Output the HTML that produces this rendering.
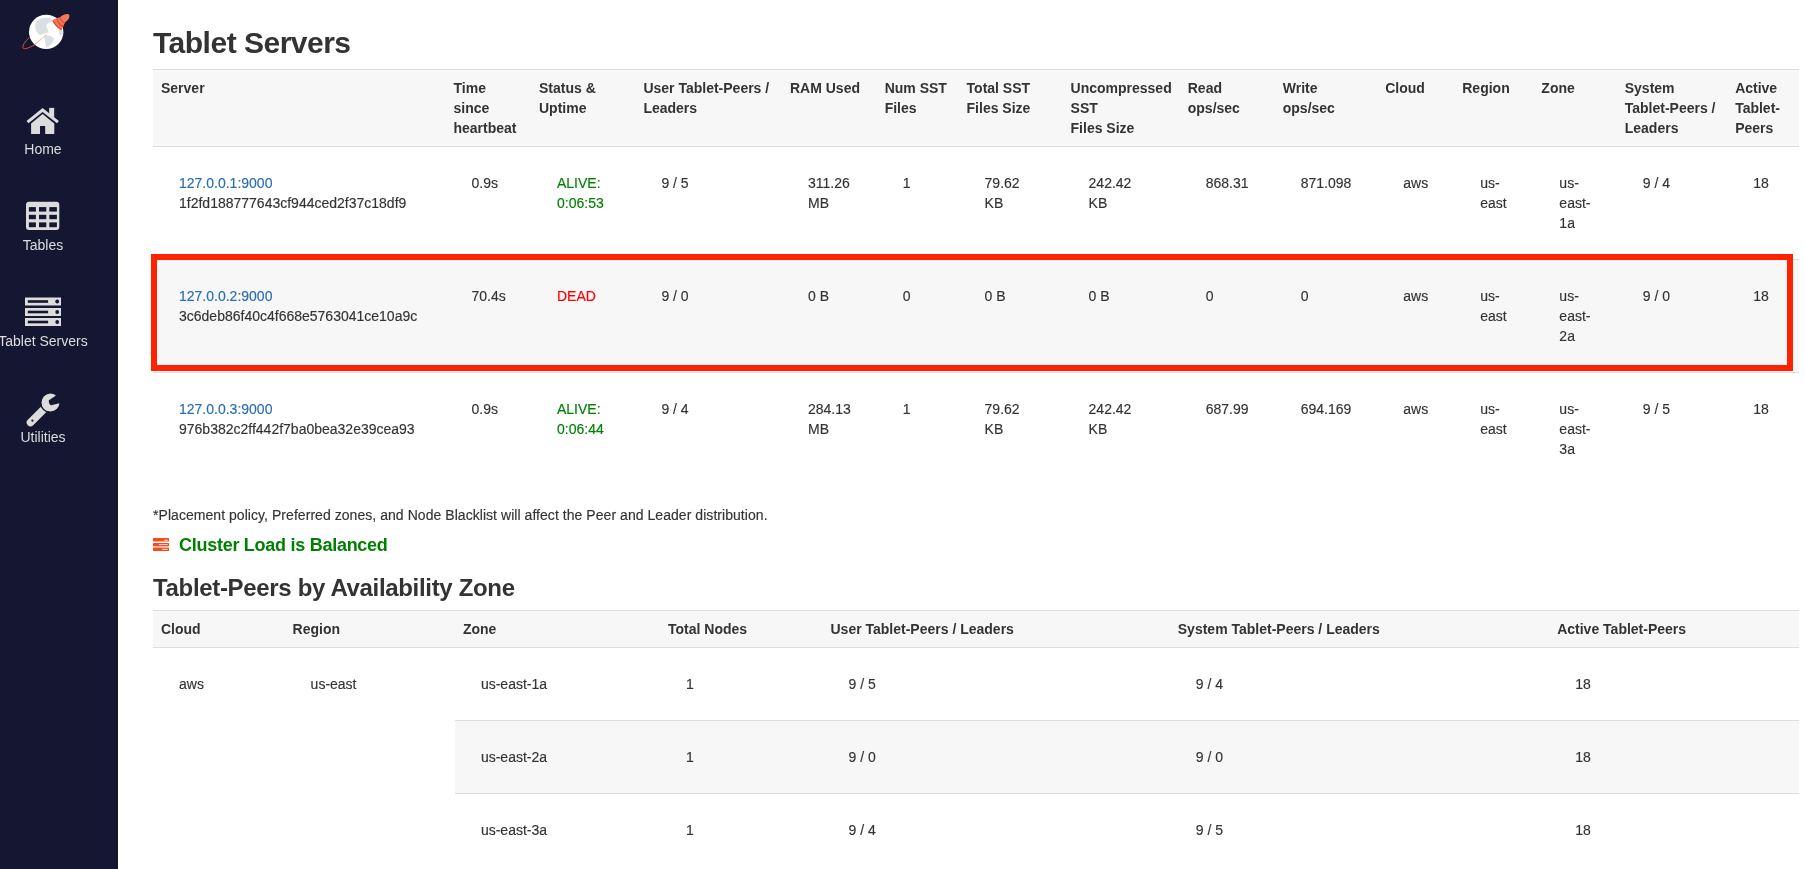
<!DOCTYPE html>
<html>
<head>
<meta charset="utf-8">
<style>
html,body{margin:0;padding:0;background:#fff;}
body{width:1805px;height:869px;overflow:hidden;position:relative;font-family:"Liberation Sans",sans-serif;font-size:14px;line-height:20px;color:#333;}
#side{will-change:transform;position:absolute;left:0;top:0;width:118px;height:869px;background:#151632;}
.nl{position:absolute;left:-20px;width:126px;text-align:center;color:#dcdcdc;font-size:14px;line-height:20px;white-space:nowrap;}
#main{will-change:transform;position:absolute;left:153px;top:0;width:1646px;}
h2{margin:0;position:absolute;top:26px;left:0;font-size:30px;line-height:33px;font-weight:bold;color:#333;white-space:nowrap;letter-spacing:-0.5px;}
h3{margin:0;position:absolute;left:0;font-size:24px;line-height:26px;font-weight:bold;letter-spacing:-0.33px;color:#333;white-space:nowrap;}
table{border-collapse:collapse;border-spacing:0;table-layout:fixed;position:absolute;left:0;}
th{background:#f7f7f7;text-align:left;vertical-align:top;font-weight:bold;padding:8px;border-top:1px solid #ddd;border-bottom:1px solid #ddd;}
td{vertical-align:top;padding:26px;-webkit-text-stroke:0.15px;border-top:1px solid #ddd;white-space:nowrap;}
tbody tr:first-child td{border-top:0;}
tr.g td{background:#f7f7f7;}
a{color:#2a6db2;text-decoration:none;}
.ok{color:#008000;}
.dead{color:#f00;}
</style>
</head>
<body>
<div id="side">
<svg width="118" height="869" viewBox="0 0 118 869" style="position:absolute;left:0;top:0">
<!-- logo -->
<circle cx="46.2" cy="31.9" r="17.2" fill="#fff"/>
<path d="M35.5,24 C37,20 41,18 45,17.8 C48,17.5 51,18 52.5,19.5 C53,21 51,22 49.5,22.5 C47,23.5 46,25 46.5,27 C47,29 49,30 48,32 C46.5,34 43.5,33 42,34.5 C40.5,35.5 39,35 38,33.5 C36,31 34.5,27 35.5,24 Z" fill="#dadfe4"/>
<path d="M44.5,35.5 C47,35 50.5,35.5 53,37.5 C54.5,39 54,41.5 52.5,43 C50,45 48,47 46.5,48 C45.5,46 45.5,43 45,40.5 C44.5,38.5 43.5,36.5 44.5,35.5 Z" fill="#dadfe4"/>
<path d="M59,29.5 C60.5,28.5 62.5,30 63.2,32.5 C63,35 61,36 60,35 C58.8,33.5 58.5,31 59,29.5 Z" fill="#dadfe4"/>
<path d="M29.2,37.6 C24.5,42 22,46 23.2,48.2 C24.5,49.6 29,48 34.5,44.8" fill="none" stroke="#d5532f" stroke-width="1" stroke-linecap="round"/>
<path d="M33.1,46.2 L53.6,28.8 L35,43.9 Z" fill="#ec6a48"/>
<path d="M52.4,20.4 C53.5,19 57,18.2 60.2,16.9 C62.8,14.8 66.5,13.6 68.7,14.2 C70,15.2 69.8,17.8 67.6,20.2 C66.6,21.2 65.6,22 65,22.6 C63.8,25 62.8,27.5 61.6,29.9 C60.6,30.2 58,27.8 56.4,25.8 C54.8,23.8 52.9,21.8 52.4,20.4 Z" fill="#f27a5b"/>
<path d="M52.9,20.7 Q55.8,26.2 61.4,29.6 M56.8,18.8 Q58.6,24.1 63.1,26.6 M59.8,17.6 Q61.6,21.8 64.8,23.4" fill="none" stroke="#e8482a" stroke-width="1.3"/>
<!-- home -->
<polygon points="26.5,120.9 42.6,107.9 58.9,120.9 57,123.3 42.6,111.9 28.5,123.3" fill="#dcdcdc"/>
<rect x="49.2" y="107.9" width="5" height="9" fill="#dcdcdc"/>
<polygon points="31.1,123.4 42.6,114.1 54.3,123.4 54.3,134.1 45.2,134.1 45.2,126 40,126 40,134.1 31.1,134.1" fill="#dcdcdc"/>
<!-- tables -->
<rect x="26" y="201.7" width="33.3" height="28.3" rx="3" fill="#dcdcdc"/>
<g fill="#151632">
<rect x="28.9" y="207.1" width="7" height="4.5"/><rect x="39" y="207.1" width="7.3" height="4.5"/><rect x="49.3" y="207.1" width="7.6" height="4.5"/>
<rect x="28.9" y="214.8" width="7" height="4.4"/><rect x="39" y="214.8" width="7.3" height="4.4"/><rect x="49.3" y="214.8" width="7.6" height="4.4"/>
<rect x="28.9" y="222.4" width="7" height="4.8"/><rect x="39" y="222.4" width="7.3" height="4.8"/><rect x="49.3" y="222.4" width="7.6" height="4.8"/>
</g>
<!-- servers -->
<g fill="#dcdcdc">
<rect x="25" y="297.5" width="36" height="8"/>
<rect x="25" y="308" width="36" height="8"/>
<rect x="25" y="318" width="36" height="8"/>
</g>
<g fill="#151632">
<rect x="27.8" y="300.2" width="20.3" height="2.6"/>
<rect x="27.8" y="310.7" width="20.3" height="2.6"/>
<rect x="27.8" y="320.7" width="20.3" height="2.6"/>
<circle cx="57.2" cy="301.5" r="1.9"/><circle cx="57.2" cy="312" r="1.9"/><circle cx="57.2" cy="322" r="1.9"/>
</g>
<!-- wrench -->
<line x1="30.5" y1="422.5" x2="45" y2="408" stroke="#dcdcdc" stroke-width="7.6" stroke-linecap="round"/>
<circle cx="50.5" cy="402.5" r="9.8" fill="none" stroke="#151632" stroke-width="1.4"/>
<circle cx="50.5" cy="402.5" r="9" fill="#dcdcdc"/>
<path d="M48.96,400.22 L57.8,394.3 L61.5,402.7 L51.12,405.18 C49.5,405 48.3,401.5 48.96,400.22Z" fill="#151632"/>
<circle cx="32.4" cy="420.7" r="1.1" fill="#151632"/>
</svg>
<div class="nl" style="top:139px">Home</div>
<div class="nl" style="top:235px">Tables</div>
<div class="nl" style="top:331px">Tablet Servers</div>
<div class="nl" style="top:427px">Utilities</div>
</div>
<div id="main">
<h2>Tablet Servers</h2>
<table id="t1" style="top:69px;width:1646px">
<colgroup><col style="width:292.5px"><col style="width:85.5px"><col style="width:104.4px"><col style="width:146.6px"><col style="width:94.7px"><col style="width:81.9px"><col style="width:104px"><col style="width:117.2px"><col style="width:95px"><col style="width:102.5px"><col style="width:77px"><col style="width:79.1px"><col style="width:83.4px"><col style="width:110.4px"><col style="width:71.8px"></colgroup>
<thead><tr><th>Server</th><th>Time<br>since<br>heartbeat</th><th>Status &amp;<br>Uptime</th><th>User Tablet-Peers /<br>Leaders</th><th>RAM Used</th><th>Num SST<br>Files</th><th>Total SST<br>Files Size</th><th>Uncompressed<br>SST<br>Files Size</th><th>Read<br>ops/sec</th><th>Write<br>ops/sec</th><th>Cloud</th><th>Region</th><th>Zone</th><th>System<br>Tablet-Peers /<br>Leaders</th><th>Active<br>Tablet-<br>Peers</th></tr></thead>
<tbody>
<tr class=""><td><a>127.0.0.1:9000</a><br>1f2fd188777643cf944ced2f37c18df9</td><td>0.9s</td><td><span class="ok">ALIVE:<br>0:06:53</span></td><td>9 / 5</td><td>311.26<br>MB</td><td>1</td><td>79.62<br>KB</td><td>242.42<br>KB</td><td>868.31</td><td>871.098</td><td>aws</td><td>us-<br>east</td><td>us-<br>east-<br>1a</td><td>9 / 4</td><td>18</td></tr>
<tr class="g"><td><a>127.0.0.2:9000</a><br>3c6deb86f40c4f668e5763041ce10a9c</td><td>70.4s</td><td><span class="dead">DEAD</span></td><td>9 / 0</td><td>0 B</td><td>0</td><td>0 B</td><td>0 B</td><td>0</td><td>0</td><td>aws</td><td>us-<br>east</td><td>us-<br>east-<br>2a</td><td>9 / 0</td><td>18</td></tr>
<tr class=""><td><a>127.0.0.3:9000</a><br>976b382c2ff442f7ba0bea32e39cea93</td><td>0.9s</td><td><span class="ok">ALIVE:<br>0:06:44</span></td><td>9 / 4</td><td>284.13<br>MB</td><td>1</td><td>79.62<br>KB</td><td>242.42<br>KB</td><td>687.99</td><td>694.169</td><td>aws</td><td>us-<br>east</td><td>us-<br>east-<br>3a</td><td>9 / 5</td><td>18</td></tr>
</tbody></table>
<div id="foot" style="position:absolute;left:0;top:505px;white-space:nowrap;letter-spacing:0.05px;-webkit-text-stroke:0.15px">*Placement policy, Preferred zones, and Node Blacklist will affect the Peer and Leader distribution.</div>
<svg style="position:absolute;left:0;top:530px" width="20" height="24" viewBox="153 530 20 24">
<g fill="#f14d1f"><rect x="153" y="538" width="16" height="3.6" rx="0.6"/><rect x="153" y="543" width="16" height="2.9" rx="0.5"/><rect x="153" y="546.3" width="16" height="1.4" fill="#f7a68c"/><rect x="153" y="547.7" width="16" height="3.2" rx="0.6"/></g>
<g fill="#fde3da"><rect x="164.4" y="539.7" width="3.3" height="1.1"/><rect x="158.8" y="544.1" width="8.9" height="0.9"/><rect x="162" y="548.8" width="5.7" height="1"/></g>
</svg>
<div id="bal" style="position:absolute;left:26px;top:533px;font-size:18px;line-height:24px;color:#008000;white-space:nowrap;font-weight:bold;letter-spacing:-0.27px">Cluster Load is Balanced</div>
<h3 style="top:574.5px">Tablet-Peers by Availability Zone</h3>
<table id="t2" style="top:610px;width:1646px">
<colgroup><col style="width:131.6px"><col style="width:170.3px"><col style="width:205.1px"><col style="width:162.5px"><col style="width:347.3px"><col style="width:379.4px"><col style="width:249.8px"></colgroup>
<thead><tr><th>Cloud</th><th>Region</th><th>Zone</th><th>Total Nodes</th><th>User Tablet-Peers / Leaders</th><th>System Tablet-Peers / Leaders</th><th>Active Tablet-Peers</th></tr></thead><tbody>
<tr><td rowspan="3">aws</td><td rowspan="3">us-east</td><td>us-east-1a</td><td>1</td><td>9 / 5</td><td>9 / 4</td><td>18</td></tr>
<tr class="g"><td>us-east-2a</td><td>1</td><td>9 / 0</td><td>9 / 0</td><td>18</td></tr>
<tr><td>us-east-3a</td><td>1</td><td>9 / 4</td><td>9 / 5</td><td>18</td></tr>
</tbody></table>
</div>
<div style="position:absolute;left:151px;top:254px;width:1630px;height:105px;border:6px solid #ff2200;will-change:transform"></div>
</body>
</html>
